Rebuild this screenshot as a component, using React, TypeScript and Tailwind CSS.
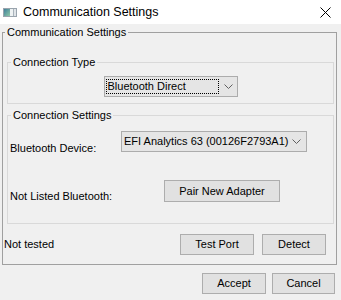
import React from 'react';

const font = { fontFamily: '"Liberation Sans", Arial, sans-serif' };

function Chevron() {
  return (
    <svg width="9" height="5" viewBox="0 0 9 5" className="shrink-0">
      <path d="M0.5 0.5 L4.5 4.5 L8.5 0.5" fill="none" stroke="#606060" strokeWidth="1" />
    </svg>
  );
}

function WinButton({ label, className }: { label: string; className: string }) {
  return (
    <button
      className={`border border-[#adadad] bg-[#e1e1e1] text-[11px] leading-[13px] text-black ${className}`}
    >
      {label}
    </button>
  );
}

function AppIcon() {
  return (
    <svg width="14" height="9" viewBox="0 0 14 9">
      <defs>
        <linearGradient id="ic" x1="0" y1="0" x2="1" y2="1">
          <stop offset="0" stopColor="#3f7f9a" />
          <stop offset="1" stopColor="#8fc9a8" />
        </linearGradient>
      </defs>
      <rect x="0.5" y="0.5" width="13" height="8" fill="#f4f6f7" stroke="#9aa4ad" />
      <rect x="1" y="1" width="6" height="7" fill="url(#ic)" />
      <rect x="7" y="1" width="3" height="7" fill="#eef2f3" />
      <rect x="10" y="1" width="1" height="7" fill="#a9b3bb" />
      <rect x="11" y="1" width="2" height="7" fill="#dfe4e8" />
    </svg>
  );
}

export default function App() {
  return (
    <div className="w-[341px] h-[300px] flex flex-col bg-[#f0f0f0] text-black overflow-hidden" style={font}>
      {/* Title bar */}
      <div className="h-[24px] bg-white flex items-center shrink-0">
        <div className="ml-[3px] flex items-center">
          <AppIcon />
        </div>
        <span className="ml-[6px] text-[12.5px] leading-[15px]">Communication Settings</span>
        <svg width="11" height="11" viewBox="0 0 11 11" className="ml-auto mr-[10px]">
          <path d="M0.5 0.5 L10.5 10.5 M10.5 0.5 L0.5 10.5" stroke="#000" strokeWidth="1" />
        </svg>
      </div>

      {/* Outer group */}
      <fieldset className="mt-[1px] ml-[2px] w-[335px] border border-[#a0a0a0] p-0">
        <legend className="ml-[2px] px-[2px] text-[11px] leading-[14px]">Communication Settings</legend>

        {/* Connection Type */}
        <fieldset className="mt-[16px] ml-[4px] mr-[2px] border border-[#d9d9d9] px-[2px] pb-[6px]">
          <legend className="ml-[1px] px-[2px] text-[11px] leading-[14px]">Connection Type</legend>
          <div className="mt-[7px] mx-auto w-[134px] h-[21px] border border-[#acacac] bg-[#e5e5e5] flex items-center">
            <div className="ml-[1px] w-[113px] h-[15px] border border-dotted border-black flex items-center">
              <span className="ml-[1px] text-[11px] leading-[13px]">Bluetooth Direct</span>
            </div>
            <div className="ml-[5px]">
              <Chevron />
            </div>
          </div>
        </fieldset>

        {/* Connection Settings */}
        <fieldset className="mt-[4px] ml-[4px] mr-[2px] border border-[#d9d9d9] px-[2px] pb-[21px]">
          <legend className="ml-[1px] px-[2px] text-[11px] leading-[14px]">Connection Settings</legend>
          <div className="mt-[9px] h-[21px] flex items-start">
            <span className="w-[111px] pt-[12px] text-[11px] leading-[11px]">Bluetooth Device:</span>
            <div className="w-[186px] h-[21px] border border-[#acacac] bg-[#e5e5e5] flex items-center">
              <span className="ml-[2px] text-[11px] leading-[13px] whitespace-nowrap">EFI Analytics 63 (00126F2793A1)</span>
              <div className="ml-auto mr-[5px]">
                <Chevron />
              </div>
            </div>
          </div>
          <div className="mt-[28px] h-[22px] flex items-start">
            <span className="w-[154px] pt-[11px] text-[11px] leading-[11px]">Not Listed Bluetooth:</span>
            <WinButton label="Pair New Adapter" className="w-[116px] h-[22px]" />
          </div>
        </fieldset>

        {/* Test row */}
        <div className="mt-[10px] mb-[9px] flex items-center">
          <span className="ml-[1px] text-[11px] leading-[13px]">Not tested</span>
          <div className="ml-auto mr-[10px] flex gap-[8px]">
            <WinButton label="Test Port" className="w-[74px] h-[21px]" />
            <WinButton label="Detect" className="w-[64px] h-[21px]" />
          </div>
        </div>
      </fieldset>

      {/* Dialog buttons */}
      <div className="mt-[8px] flex justify-end gap-[6px] pr-[6px]">
        <WinButton label="Accept" className="w-[64px] h-[21px]" />
        <WinButton label="Cancel" className="w-[63px] h-[21px]" />
      </div>
    </div>
  );
}
